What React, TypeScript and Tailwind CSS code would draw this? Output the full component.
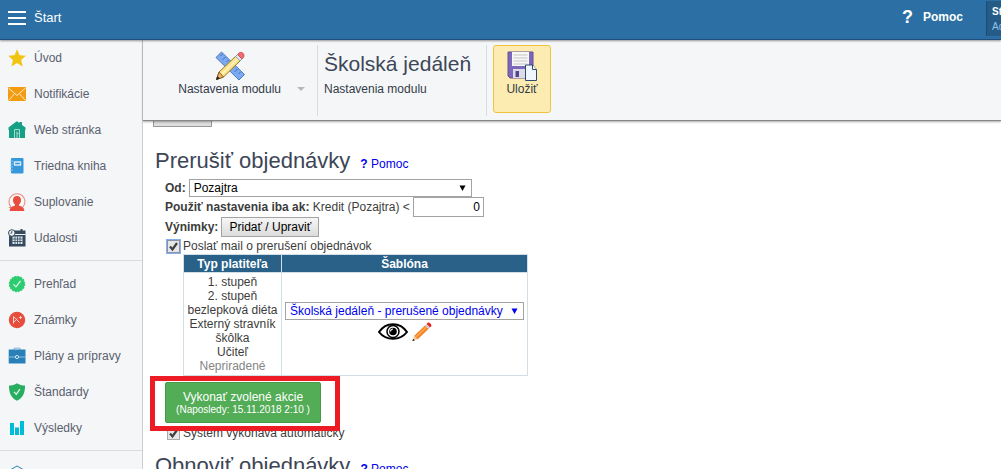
import type { ReactNode } from "react";

const Star = () => (
  <svg viewBox="0 0 18 18" className="size-[18px]">
    <path d="M9 .2l2.600 6 6.300.5-4.800 4.200 1.600 6.600L9 14l-5.600 3.500L5 10.900.2 6.700l6.300-.5z" fill="#f1c40f" />
  </svg>
);

const Mail = () => (
  <svg viewBox="0 0 18 18" className="size-[18px]">
    <rect y="2" width="18" height="14" fill="#f39c12" />
    <path d="M.5 3L9 10.500 17.500 3M.5 15.500L6.300 9M17.500 15.500L11.700 9" fill="none" stroke="#fdebc8" strokeWidth="1" />
  </svg>
);

const House = () => (
  <svg viewBox="0 0 18 18" className="size-[18px]">
    <path d="M.5 6.500L7 1.500l2-1.300L11.500 2V1H14v3l3.500 2.500V9H17v8H1V9H.5z" fill="#16a085" />
    <path d="M6.500 17V8.500h5V17M9 10.500V17M9 12.500h1.500" fill="none" stroke="#a6dccf" strokeWidth="1" />
  </svg>
);

const Book = () => (
  <svg viewBox="0 0 18 18" className="size-[18px]">
    <rect x="3" y="1" width="12.500" height="15.500" rx="1" fill="#3498db" />
    <path d="M6.500 5h6v3h-6z" fill="#3498db" stroke="#d5ebf9" strokeWidth="1.400" />
    <path d="M2 4h3M2 7h3M2 10h3M2 13h3" stroke="#8fc6ee" />
  </svg>
);

const Person = () => (
  <svg viewBox="0 0 18 18" className="size-[18px]">
    <path d="M3 14A8 8 0 1 1 15 14M1 11l2 3M.8 14.500h2.800" fill="none" stroke="#ec8a80" strokeWidth="1.100" />
    <path d="M9 3c2.700 0 4 1.900 4 4.300 0 2-.9 3.400-2 4.200v1.300c3 .5 5.300 1.700 5.300 5.200H1.700c0-3.500 2.300-4.700 5.300-5.200v-1.300c-1.100-.8-2-2.200-2-4.200C5 4.900 6.300 3 9 3z" fill="#e74c3c" />
  </svg>
);

const Events = () => (
  <svg viewBox="0 0 18 18" className="size-[18px]">
    <path d="M2 1.500h15.500V17.500H1V8z" fill="#34495e" />
    <path d="M5 5.500h12.500" stroke="#f5f6f8" />
    <path d="M13.500 0v4" stroke="#34495e" strokeWidth="2" />
    <path d="M4.500 7.500h10v7.500h-10z" fill="#dfe4e8" />
    <path d="M4.500 10h10M4.500 12.500h10M7 7.500v7.500M9.500 7.500v7.500M12 7.500v7.500" stroke="#34495e" strokeWidth=".8" />
    <circle cx="3.800" cy="4" r="3.300" fill="#f5f6f8" stroke="#34495e" />
    <path d="M3.800 2v2.200H2.300" fill="none" stroke="#34495e" strokeWidth=".9" />
  </svg>
);

const Check = () => (
  <svg viewBox="0 0 18 18" className="size-[18px]">
    <circle cx="9" cy="9" r="7.600" fill="#2ecc71" stroke="#2ecc71" strokeWidth="1.200" strokeDasharray="2 1" />
    <path d="M5.500 9.300l2.500 2.500 4.500-6" fill="none" stroke="#e8fbf0" strokeWidth="1.200" />
  </svg>
);

const Grade = () => (
  <svg viewBox="0 0 18 18" className="size-[18px]">
    <circle cx="9" cy="9" r="8.200" fill="#e74c3c" />
    <path d="M5.500 12.500V5.500L11.500 11.500M5.500 11.500L9.500 7.500M11 6.500h3M12.500 5v3" fill="none" stroke="#f9d3cf" strokeWidth="1" />
  </svg>
);

const Briefcase = () => (
  <svg viewBox="0 0 18 18" className="size-[18px]">
    <path d="M6 3V1.200h6V3" fill="none" stroke="#7db2d9" />
    <rect x=".7" y="2.500" width="16.800" height="14" fill="#2980b9" />
    <path d="M.7 10h6.300M11 10h6.500" stroke="#8fbfe0" />
    <circle cx="9" cy="10" r="1.600" fill="none" stroke="#d3e6f4" />
  </svg>
);

const Shield = () => (
  <svg viewBox="0 0 18 18" className="size-[18px]">
    <path d="M9 .2c2.300 1.800 5 2.300 8 2.400 0 6.700-1.500 12.200-8 15.200C2.500 14.800 1 9.300 1 2.600c3-.1 5.700-.6 8-2.400z" fill="#27ae60" />
    <path d="M6 8.800l2.300 2.400 3.700-5" fill="none" stroke="#e1f7ea" strokeWidth="1.200" />
  </svg>
);

const Bars = () => (
  <svg viewBox="0 0 18 18" className="size-[18px]">
    <path d="M2 4h4v12H2zM7 8.500h4V16H7zM12 2h4v14h-4z" fill="#00bcd4" />
  </svg>
);

const Hexagon = () => (
  <svg viewBox="0 0 18 18" className="size-[18px]">
    <path d="M9 1l7 4v8l-7 4-7-4V5z" fill="none" stroke="#2980b9" />
  </svg>
);

const RulerPencil = () => (
  <svg viewBox="0 0 30 30" className="size-[30px]">
    <path d="M1 6.500L6.500 1 29.500 23.500 24 29z" fill="#7baaf0" stroke="#4a78c0" />
    <path d="M7.500 3l-2 2M10.500 6l-3 3M13.500 9l-2 2M19.500 15l-2 2M22.500 18l-3 3M25.500 21l-2 2" stroke="#3a67ad" strokeWidth=".9" />
    <path d="M1.500 28.500L4 21 21.500 4.500l4.500 4.500L8.500 26z" fill="#fbe38a" stroke="#97762c" />
    <path d="M6.500 23.500L23.500 7" stroke="#fff4bd" strokeWidth="1.500" />
    <path d="M1.500 28.500L4 21l4.500 5z" fill="#edb566" stroke="#8b6125" />
    <path d="M1 29l1.300-4 2.700 2.600z" fill="#222" />
    <path d="M20.500 5.500l2-2 4.500 4.500-2 2z" fill="#dbe6ee" stroke="#8296a8" strokeWidth=".8" />
    <path d="M22.500 3.500l1.500-1.500c2.500-2 6.500 1 4.500 4.500L27 8z" fill="#f16b72" stroke="#ca4b52" strokeWidth=".8" />
  </svg>
);

const Floppy = () => (
  <svg viewBox="0 0 30 30" className="size-[30px]">
    <path d="M1 1h25v26H3l-2-2z" fill="#7d67b8" stroke="#63509c" />
    <path d="M5 1h17v14H5z" fill="#f7f7f7" />
    <path d="M6.500 4h14M6.500 7h14M6.500 10h14M6.500 13h14" stroke="#c5c5c5" />
    <path d="M6 18h14v9H6z" fill="#dcdbe8" />
    <path d="M8.500 20h3.500v6H8.500z" fill="#56458b" />
    <path d="M18.500 14h7l4 4.500v11h-11z" fill="#eff6fe" stroke="#2e4a6d" />
    <path d="M25.500 14v4.500h4" fill="#fff" stroke="#2e4a6d" />
  </svg>
);

const Eye = () => (
  <svg viewBox="0 0 30 20" className="h-5 w-[30px]">
    <path d="M1 10C8-.5 22-.5 29 10 22 19 8 19 1 10z" fill="#fff" stroke="#000" strokeWidth="2" />
    <circle cx="15" cy="9.500" r="6" fill="#fff" stroke="#000" strokeWidth="1.500" />
    <circle cx="15" cy="9.500" r="3.800" />
    <path d="M12.500 9.500a2.500 2.500 0 0 1 2.500-2.500" fill="none" stroke="#fff" strokeWidth="1.200" />
  </svg>
);

const Pencil = () => (
  <svg viewBox="0 0 20 20" className="size-5">
    <path d="M2 14L13.500 3l3.500 3.500L5.500 17.500z" fill="#f58426" />
    <path d="M3.500 15.500L15 4.500" stroke="#ffad55" strokeWidth="1.200" />
    <path d="M2 14l3.500 3.500L.5 19z" fill="#f0cfa2" />
    <path d="M1.200 16.800l1.700 1.500L.3 19.200z" fill="#222" />
    <path d="M13 3.500L14.500 2 18 5.500 16.500 7z" fill="#cfd6da" />
    <path d="M14.500 2L15.700.8c1.500-1 4.500 1.700 3.500 3.400L18 5.500z" fill="#e8282c" />
  </svg>
);

const groups = [
  [
    { label: "Úvod", icon: <Star /> },
    { label: "Notifikácie", icon: <Mail /> },
    { label: "Web stránka", icon: <House /> },
    { label: "Triedna kniha", icon: <Book /> },
    { label: "Suplovanie", icon: <Person /> },
    { label: "Udalosti", icon: <Events /> },
  ],
  [
    { label: "Prehľad", icon: <Check /> },
    { label: "Známky", icon: <Grade /> },
    { label: "Plány a prípravy", icon: <Briefcase /> },
    { label: "Štandardy", icon: <Shield /> },
    { label: "Výsledky", icon: <Bars /> },
  ],
  [{ label: "Vyučovanie", icon: <Hexagon /> }],
];

const payers = ["1. stupeň", "2. stupeň", "bezlepková diéta", "Externý stravník", "škôlka", "Učiteľ"];

function CheckBox({ id, focused }: { id: string; focused?: boolean }) {
  return (
    <span className="relative flex size-[13px] shrink-0">
      <input
        id={id}
        type="checkbox"
        defaultChecked
        className={`peer size-[13px] appearance-none border bg-[#e6e6e6] ${
          focused ? "border-[#8a93a3] ring-1 ring-[#86aef0]" : "border-[#aaa]"
        }`}
      />
      <svg viewBox="0 0 13 13" className="pointer-events-none absolute inset-0 hidden peer-checked:block">
        <path d="M3 6.500l2.500 3L10 3" fill="none" stroke="#404040" strokeWidth="2.200" />
      </svg>
    </span>
  );
}

function SelectBox({ id, label, value, className }: { id: string; label?: string; value: string; className: string }) {
  return (
    <span className={`relative flex ${className}`}>
      <select
        id={id}
        aria-label={label}
        className="h-[18px] w-full appearance-none border border-[#a3a3a3] bg-white pl-1 leading-4"
      >
        <option>{value}</option>
      </select>
      <svg viewBox="0 0 8 7" className="pointer-events-none absolute top-[6px] right-[6px] h-[6px] w-[7px]">
        <path d="M.5.5h7L4 7z" fill="currentColor" />
      </svg>
    </span>
  );
}

function SectionTitle({ children }: { children: ReactNode }) {
  return (
    <div className="flex items-baseline gap-[10px] pl-[2px] leading-7">
      <h2 className="text-[22px] text-[#3d4657]">{children}</h2>
      <a href="#pomoc" className="text-[#0000ee]">
        <b className="font-black">?</b> Pomoc
      </a>
    </div>
  );
}

export default function App() {
  return (
    <div className="flex h-screen flex-col overflow-hidden bg-white font-['Liberation_Sans',Arial,sans-serif] text-xs text-[#3c3c3c]">
      <header className="z-10 flex h-10 shrink-0 border-b border-[#1f4f7a] bg-[#2b6fa4] text-white shadow-[0_1px_2px_#0006]">
        <button className="flex items-center gap-2 pb-1 pl-2 text-[13px]">
          <svg viewBox="0 0 18 14" className="h-[14px] w-[18px]">
            <path d="M0 1h18M0 7h18M0 13h18" stroke="#fff" strokeWidth="2" />
          </svg>
          Štart
        </button>
        <a href="#pomoc" className="mr-[23px] ml-auto flex items-center gap-[10px] pb-[6px] font-bold">
          <span className="text-lg leading-5 font-black">?</span>
          Pomoc
        </a>
        <div className="mt-px h-[35px] w-[15px] overflow-hidden border-l border-[#1d4c73] bg-[#255b87] pt-[3px] pl-[5px]">
          <div className="text-[10px] leading-4 font-bold">St</div>
          <div className="text-[10px] leading-[14px] text-[#8fc0ea]">Ad</div>
        </div>
      </header>

      <div className="flex min-h-0 grow">
        <nav className="w-[143px] shrink-0 overflow-hidden border-r border-[#cdced1] bg-[#f5f6f8] text-[#59606e]">
          {groups.map((items, i) => (
            <ul key={i} className="border-b border-[#d9dbde] pb-1 not-first:pt-[5px]">
              {items.map(({ label, icon }) => (
                <li key={label}>
                  <a href="#modul" className="flex h-9 items-center gap-2 pl-2">
                    {icon}
                    {label}
                  </a>
                </li>
              ))}
            </ul>
          ))}
        </nav>

        <main className="flex min-w-0 grow flex-col">
          <div className="z-0 flex h-[81px] shrink-0 border-b border-[#85878b] bg-[#f5f6f8] pt-[5px] pb-1 text-[#333b47] shadow-[0_1px_2px_#0005]">
            <button className="flex w-[175px] items-start justify-end border-r border-[#d9dbde] pt-[6px] pr-3">
              <span className="flex flex-col items-center leading-4">
                <RulerPencil />
                Nastavenia modulu
              </span>
              <svg viewBox="0 0 8 4" className="mt-9 ml-4 h-1 w-2">
                <path d="M0 0h8L4 4z" fill="#b5b7ba" />
              </svg>
            </button>
            <div className="w-[169px] border-r border-[#d9dbde] pt-[6px] pl-[6px]">
              <h1 className="text-[21px] leading-[26px] text-[#3d4657]">Školská jedáleň</h1>
              <p className="mt-1 leading-4">Nastavenia modulu</p>
            </div>
            <button className="ml-[6px] flex h-[68px] w-[58px] flex-col items-center rounded-[3px] border border-[#efc33c] bg-[#fdecb2] pt-[5px] leading-4">
              <Floppy />
              Uložiť
            </button>
          </div>

          <div className="min-h-0 grow overflow-hidden pl-[10px]">
            <button aria-label="Pridať" className="block h-[6px] w-[59px] border border-t-0 border-[#999] bg-[#dedede]" />
            <div className="mt-5">
              <SectionTitle>Prerušiť objednávky</SectionTitle>
            </div>
            <form className="pl-3">
              <div className="mt-px flex items-center gap-[3px]">
                <label htmlFor="od" className="font-bold">Od:</label>
                <SelectBox id="od" value="Pozajtra" className="w-[283px] text-black" />
              </div>
              <div className="flex items-center gap-[3px]">
                <label htmlFor="kredit">
                  <b>Použiť nastavenia iba ak:</b> Kredit (Pozajtra) &lt;
                </label>
                <input id="kredit" defaultValue="0" className="h-5 w-[71px] border border-[#a3a3a3] pr-[3px] text-right text-black" />
              </div>
              <div className="flex items-center gap-[3px]">
                <b>Výnimky:</b>
                <button type="button" className="h-5 w-[98px] border border-[#a3a3a3] bg-linear-to-b from-[#f6f6f6] to-[#dcdcdc] text-black">
                  Pridať / Upraviť
                </button>
              </div>
              <div className="mt-px flex items-center gap-[3px] pl-[2px]">
                <CheckBox id="mail" focused />
                <label htmlFor="mail">Poslať mail o prerušení objednávok</label>
              </div>
              <table className="ml-[18px] border-collapse text-center">
                <thead>
                  <tr className="h-[18px] bg-[#296189] text-white">
                    <th className="w-[98px] border border-[#d3dfe6]">Typ platiteľa</th>
                    <th className="w-[246px] border border-[#d3dfe6]">Šablóna</th>
                  </tr>
                </thead>
                <tbody>
                  <tr>
                    <td className="border border-[#d3dfe6] py-[2px] leading-[14px]">
                      {payers.map((name) => (
                        <div key={name}>{name}</div>
                      ))}
                      <div className="text-[#858585]">Nepriradené</div>
                    </td>
                    <td className="border border-[#d3dfe6]">
                      <SelectBox
                        id="sablona"
                        label="Šablóna"
                        value="Školská jedáleň - prerušené objednávky"
                        className="mx-[3px] text-[#0000ee]"
                      />
                      <div className="mt-[2px] mb-1 flex justify-center gap-1">
                        <button type="button" aria-label="Zobraziť"><Eye /></button>
                        <button type="button" aria-label="Upraviť"><Pencil /></button>
                      </div>
                    </td>
                  </tr>
                </tbody>
              </table>
              <div className="relative mt-[6px] w-fit">
                <button type="button" className="block h-[41px] w-[156px] rounded-[2px] border border-[#459a49] bg-[#52ad56] text-white">
                  <span className="block leading-[14px]">Vykonať zvolené akcie</span>
                  <span className="block text-[10px] leading-3">(Naposledy: 15.11.2018 2:10 )</span>
                </button>
                {/* Highlight frame, sits over the rows around the button */}
                <div className="pointer-events-none absolute -top-[6px] -right-[19px] -bottom-2 -left-[15px] z-10 border-[5px] border-[#ed1c24]" />
              </div>
              <div className="mt-[2px] flex items-center gap-[3px] pl-[2px]">
                <CheckBox id="auto" />
                <label htmlFor="auto">Systém vykonáva automaticky</label>
              </div>
            </form>
            <div className="mt-[11px]">
              <SectionTitle>Obnoviť objednávky</SectionTitle>
            </div>
          </div>
        </main>
      </div>
    </div>
  );
}
